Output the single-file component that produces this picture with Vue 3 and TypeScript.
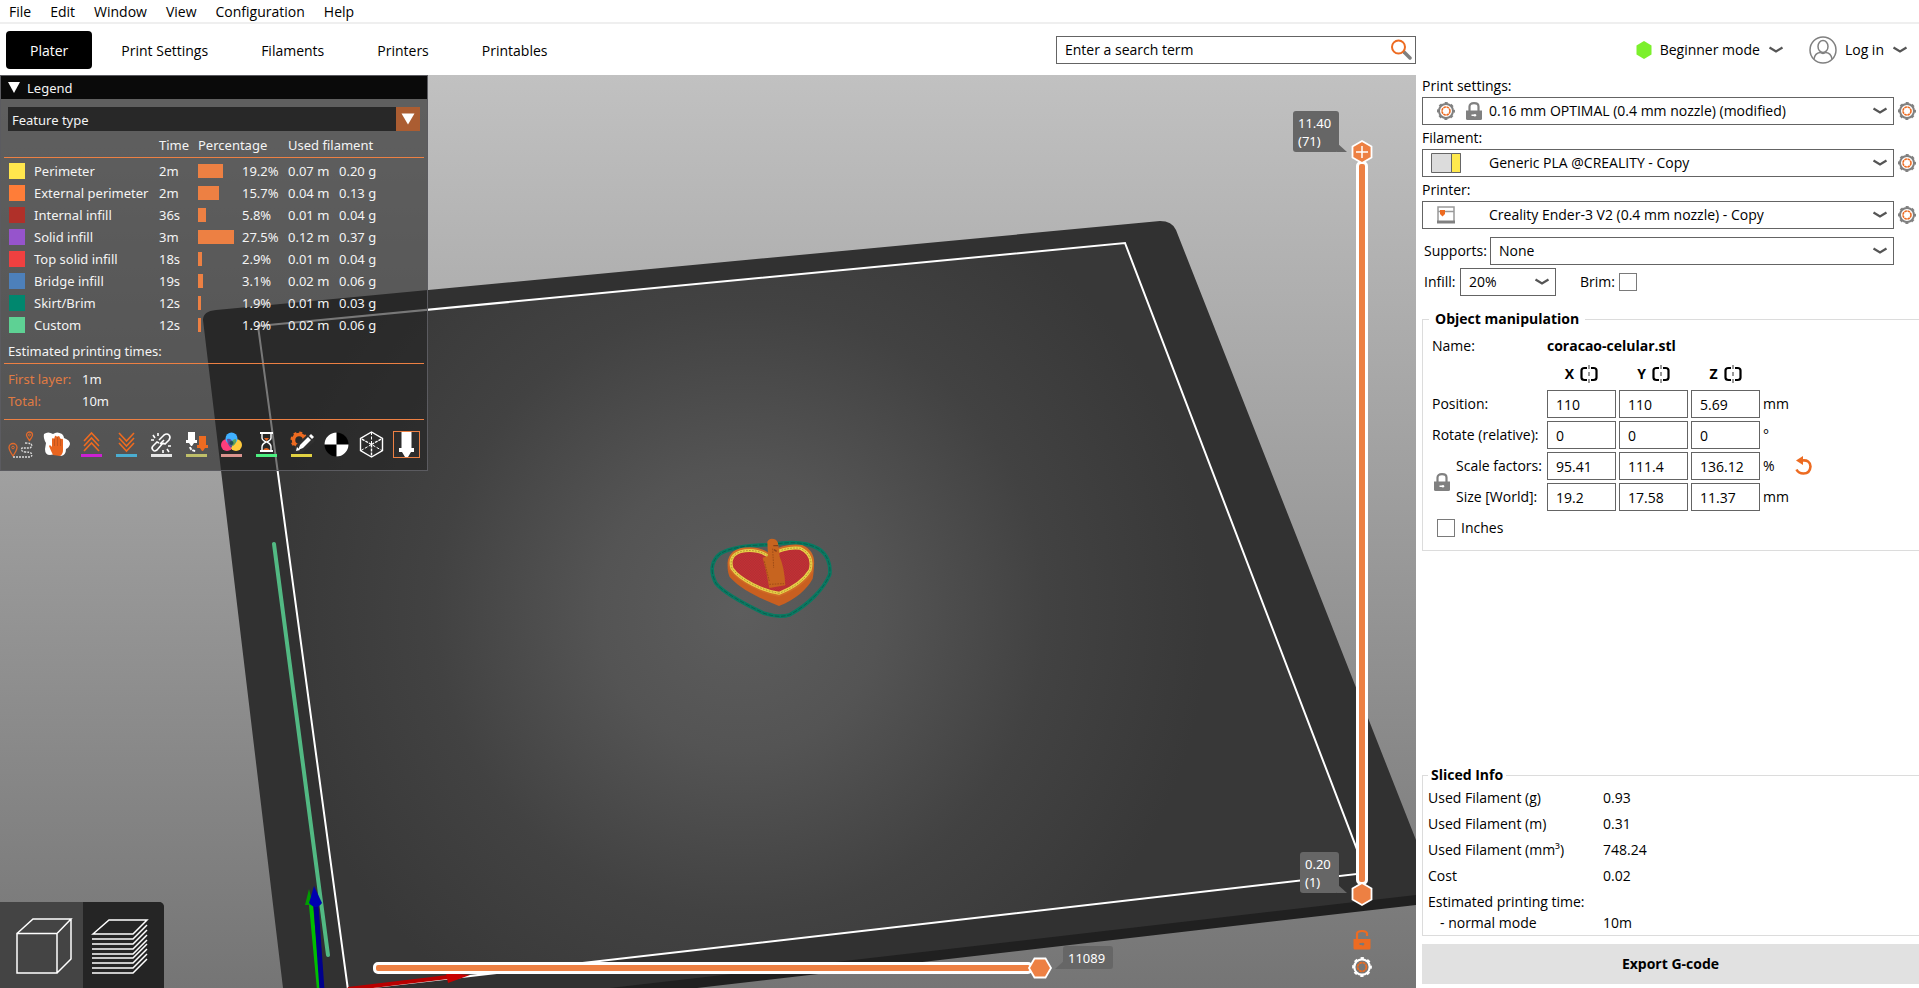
<script setup lang="ts">
import { ref } from 'vue'

interface Feature {
  name: string
  color: string
  time: string
  percent: number
  meters: string
  grams: string
}

const menus = ['File', 'Edit', 'Window', 'View', 'Configuration', 'Help']
const tabs = ['Plater', 'Print Settings', 'Filaments', 'Printers', 'Printables']
const activeTab = ref('Plater')

const features: Feature[] = [
  { name: 'Perimeter', color: '#ffe64d', time: '2m', percent: 19.2, meters: '0.07 m', grams: '0.20 g' },
  { name: 'External perimeter', color: '#ff7d38', time: '2m', percent: 15.7, meters: '0.04 m', grams: '0.13 g' },
  { name: 'Internal infill', color: '#b03029', time: '36s', percent: 5.8, meters: '0.01 m', grams: '0.04 g' },
  { name: 'Solid infill', color: '#9654cc', time: '3m', percent: 27.5, meters: '0.12 m', grams: '0.37 g' },
  { name: 'Top solid infill', color: '#f04040', time: '18s', percent: 2.9, meters: '0.01 m', grams: '0.04 g' },
  { name: 'Bridge infill', color: '#4d80ba', time: '19s', percent: 3.1, meters: '0.02 m', grams: '0.06 g' },
  { name: 'Skirt/Brim', color: '#00876e', time: '12s', percent: 1.9, meters: '0.01 m', grams: '0.03 g' },
  { name: 'Custom', color: '#5ed194', time: '12s', percent: 1.9, meters: '0.02 m', grams: '0.06 g' },
]

const presets = [
  { id: 'print', label: 'Print settings:', value: '0.16 mm OPTIMAL (0.4 mm nozzle) (modified)' },
  { id: 'filament', label: 'Filament:', value: 'Generic PLA @CREALITY - Copy' },
  { id: 'printer', label: 'Printer:', value: 'Creality Ender-3 V2 (0.4 mm nozzle) - Copy' },
]

const axes = ['X', 'Y', 'Z']
const transforms = [
  { label: 'Position:', indent: false, values: ['110', '110', '5.69'], unit: 'mm' },
  { label: 'Rotate (relative):', indent: false, values: ['0', '0', '0'], unit: '°' },
  { label: 'Scale factors:', indent: true, values: ['95.41', '111.4', '136.12'], unit: '%' },
  { label: 'Size [World]:', indent: true, values: ['19.2', '17.58', '11.37'], unit: 'mm' },
]

const sliced = [
  ['Used Filament (g)', '0.93'],
  ['Used Filament (m)', '0.31'],
  ['Used Filament (mm³)', '748.24'],
  ['Cost', '0.02'],
]

const layerLines = [939, 944, 949, 954, 958, 963, 968, 973]
const topLayer = ref(71)
const bottomLayer = ref(1)
const move = ref(11089)
const brim = ref(false)
const inches = ref(false)
</script>

<template>
  <div class="app">
    <svg class="defs" aria-hidden="true">
      <symbol id="gear" viewBox="-10 -10 20 20">
        <circle r="7" fill="none" stroke="currentColor" stroke-width="2" />
        <circle r="8" fill="none" stroke="currentColor" stroke-width="2" stroke-dasharray="3 3.283" stroke-dashoffset="1.5" />
        <circle r="4" fill="none" stroke="#ed6b21" stroke-width="1.6" stroke-dasharray="2.6 .54" />
      </symbol>
      <symbol id="chevron" viewBox="0 0 16 8">
        <path d="M1.5 1.5 8 5.5l6.500-4" fill="none" stroke="#555" stroke-width="2.2" />
      </symbol>
      <symbol id="lock" viewBox="0 0 16 18">
        <path d="M3.500 9V4.500Q3.500 1.200 8 1.200t4.500 3.300V9" fill="none" stroke="currentColor" stroke-width="2.200" />
        <path d="M0 8.500h16v8q0 1.500-1.500 1.500h-13Q0 18 0 16.500z" fill="currentColor" />
        <path d="M5.500 12.500h2q2-1.500 3 .7-1 2-3 .8h-2z" fill="#fff" />
      </symbol>
    </svg>

    <nav class="menubar" aria-label="Menu">
      <button v-for="m in menus" :key="m" type="button">{{ m }}</button>
    </nav>

    <header class="topbar">
      <nav class="tabs" aria-label="Pages">
        <button
          v-for="t in tabs"
          :key="t"
          type="button"
          :class="{ active: t === activeTab }"
          @click="activeTab = t"
        >{{ t }}</button>
      </nav>
      <label class="search">
        <input type="text" placeholder="Enter a search term" aria-label="Search" />
        <svg width="22" height="22" viewBox="0 0 22 22" aria-hidden="true">
          <path d="m14 13 6 6" stroke="#808080" stroke-width="3.500" stroke-linecap="round" />
          <circle cx="8.500" cy="8" r="6.500" fill="#fff" stroke="#ed6b21" stroke-width="2" />
        </svg>
      </label>
      <div class="account">
        <button type="button" class="mode">
          <svg width="16" height="18" viewBox="0 0 16 18" aria-hidden="true"><path d="M8 0l7.500 4.500v9L8 18 .5 13.500v-9z" fill="#7cf02c" /></svg>
          <span>Beginner mode</span>
          <svg width="16" height="8" aria-hidden="true"><use href="#chevron" /></svg>
        </button>
        <button type="button" class="login">
          <svg width="28" height="28" viewBox="0 0 28 28" fill="none" stroke="#808080" stroke-width="1.500" aria-hidden="true">
            <circle cx="14" cy="14" r="13" />
            <ellipse cx="14" cy="10.500" rx="5" ry="6" />
            <path d="M5 23q1-6 6-6.500 3 2 6 0 5 .5 6 6.500" />
          </svg>
          <span>Log in</span>
          <svg width="16" height="8" aria-hidden="true"><use href="#chevron" /></svg>
        </button>
      </div>
    </header>

    <div class="workspace">
      <main class="viewport">
        <svg class="scene" viewBox="0 75 1416 913" preserveAspectRatio="xMidYMid slice" role="img" aria-label="Print bed with sliced heart">
          <defs>
            <linearGradient id="sky" x1="0" y1="0" x2="0" y2="1">
              <stop offset="0" stop-color="#c1c1c1" />
              <stop offset="1" stop-color="#757575" />
            </linearGradient>
            <radialGradient id="plate" gradientUnits="userSpaceOnUse" cx="740" cy="610" r="470">
              <stop offset="0" stop-color="#5d5d5d" />
              <stop offset=".3" stop-color="#545454" />
              <stop offset=".65" stop-color="#424242" />
              <stop offset="1" stop-color="#383838" />
            </radialGradient>
            <pattern id="hatch" width="5" height="5" patternUnits="userSpaceOnUse">
              <rect width="5" height="5" fill="#c93137" />
              <path d="M0 0l5 5" stroke="#9b2b2d" stroke-width="1.500" />
            </pattern>
          </defs>
          <rect y="75" width="1416" height="913" fill="url(#sky)" />
          <path d="M283 988H697L1416 905V890L400 970z" fill="#202020" />
          <path d="M203 320q0-9 13-10L1160 221q12 0 16 9L1416 840v55L610 988H283z" fill="#313131" />
          <path d="M258 326 1125 243 1366 873 348 990z" fill="url(#plate)" />
          <path d="M258 326 1125 243 1366 873 348 990z" fill="none" stroke="#fff" stroke-width="2" />
          <path d="M274 544 328 955" stroke="#52b983" stroke-width="4" stroke-linecap="round" />
          <path d="m311 905 8 85" stroke="#00be00" stroke-width="4" />
          <path d="m309 889 4 16h-8z" fill="#009c00" />
          <path d="m316 905 6 85" stroke="#00008c" stroke-width="5" />
          <path d="m314 886 8 17q-6 8-13 0z" fill="#0000b0" />
          <path d="m348 989 100-12" stroke="#b80000" stroke-width="4" />
          <path d="m446 973 24 2-22 8z" fill="#c80000" />

          <g transform="translate(690 520) scale(.3333)">
            <path d="M245 74C300 64 350 66 385 86c28 17 38 50 34 78-18 44-64 90-119 120-28 9-50 5-78-4C170 255 100 218 78 190c-18-33-16-68 14-90 36-20 90-25 153-26z" fill="none" stroke="#087a62" stroke-width="11" />
            <path d="M245 74C300 64 350 66 385 86c28 17 38 50 34 78-18 44-64 90-119 120-28 9-50 5-78-4C170 255 100 218 78 190c-18-33-16-68 14-90 36-20 90-25 153-26z" fill="none" stroke="#0b4f42" stroke-width="2" stroke-dasharray="14 5" />
            <path d="M114 118c-3 22-1 40 5 53 38 42 98 66 148 87 50-20 84-50 101-82 5-22 3-45 1-60z" fill="#c95f20" />
            <path d="M267 226C218 218 148 185 121 147c-10-27 2-50 29-58 36-9 70 0 89 17 18-21 60-32 96-27 33 14 38 43 30 75-20 34-56 56-98 72z" fill="url(#hatch)" stroke="#d06a26" stroke-width="8" stroke-linejoin="round" />
            <path d="M267 220C219 212 151 181 126 145c-8-25 2-43 26-50 35-9 69 1 87 17 20-21 58-31 92-27 29 13 37 38 29 66-20 32-51 53-93 69z" fill="none" stroke="#e8d048" stroke-width="9" stroke-linejoin="round" />
            <path d="M267 220C219 212 151 181 126 145c-8-25 2-43 26-50 35-9 69 1 87 17 20-21 58-31 92-27 29 13 37 38 29 66-20 32-51 53-93 69z" fill="none" stroke="#9c7a26" stroke-width="2" stroke-dasharray="5 4" />
            <path d="M232 65q6-12 20-8 12 4 13 18l4 35q14 30 17 86l-48 8q-8-50-20-91l16-5z" fill="#c7641f" />
            <path d="m238 193 44-2m-34-105 3 58m-28-20 15 60" stroke="#9f4b16" stroke-width="3" stroke-dasharray="5 3" fill="none" />
            <path d="M250 77h14m-12 12 8 5" stroke="#87401a" stroke-width="4" />
          </g>
        </svg>

        <section class="legend" aria-label="Legend">
          <h2>
            <svg width="14" height="12" viewBox="0 0 14 12" aria-hidden="true"><path d="M1 0h12L7 11z" fill="#fff" /></svg>
            Legend
          </h2>
          <div class="viewtype">
            <select aria-label="View type"><option>Feature type</option></select>
            <svg width="24" height="24" viewBox="0 0 24 24" aria-hidden="true"><path fill="#ab5d32" d="M0 0h24v24H0z" /><path d="M5.500 6.500h13l-6.500 11z" fill="#fff" /></svg>
          </div>
          <table>
            <colgroup>
              <col class="c-swatch" /><col class="c-name" /><col class="c-time" /><col class="c-bar" /><col class="c-pct" /><col class="c-m" /><col />
            </colgroup>
            <thead>
              <tr><th colspan="2"></th><th>Time</th><th colspan="2">Percentage</th><th colspan="2">Used filament</th></tr>
            </thead>
            <tbody>
              <tr v-for="f in features" :key="f.name">
                <td><i class="swatch" :style="{ background: f.color }"></i></td>
                <td>{{ f.name }}</td>
                <td>{{ f.time }}</td>
                <td><i class="bar" :style="{ width: Math.ceil(f.percent * 1.3) + 'px' }"></i></td>
                <td>{{ f.percent.toFixed(1) }}%</td>
                <td>{{ f.meters }}</td>
                <td>{{ f.grams }}</td>
              </tr>
            </tbody>
          </table>
          <p class="estimate">Estimated printing times:</p>
          <dl>
            <dt>First layer:</dt><dd>1m</dd>
            <dt>Total:</dt><dd>10m</dd>
          </dl>
          <div class="toggles">
            <button type="button" aria-label="Travel">
              <svg viewBox="0 0 27 27" fill="none">
                <path d="M5 25q-4-6-4-8.500a4 4 0 0 1 8 0Q9 19 5 25z" stroke="#e06a2c" stroke-width="1.300" /><circle cx="5" cy="16.500" r="1.300" stroke="#e06a2c" />
                <path d="M21.500 9.500q-3-4-3-5.500a3 3 0 0 1 6 0q0 1.500-3 5.500z" stroke="#e06a2c" stroke-width="1.300" /><circle cx="21.500" cy="4" r="1" stroke="#e06a2c" />
                <path d="M5 26h17q3-1 1-4-1-1-6-1-5-1-3-4h8q3-2 1-4-2-1-6-1" stroke="#ddd" stroke-width="1.300" stroke-dasharray="2 1" />
              </svg>
            </button>
            <button type="button" aria-label="Wipe">
              <svg viewBox="0 0 27 27">
                <path d="M1 3q4-3 9 0 4-3 9 0 2 2 2 4 6 2 6 6-1 4-4 5 0 6-5 7l-5-2-6 1q-5 0-5-6l1-6q-3-5-2-9z" fill="#fff" />
                <path d="M10 24q-2-4-4-9 1-2 3 1V8q1-2 2 0l1-3q1-1 2 1l1-1q2 0 2 2l1 1q2-1 2 1v10q0 4-3 6z" fill="#e8641f" />
                <path d="M11.500 8v7m3-9v9m3-7v7" stroke="#b5501e" stroke-width=".7" />
              </svg>
            </button>
            <button type="button" aria-label="Retractions">
              <svg viewBox="0 0 27 27" fill="none"><path d="m6 10 7.500-8L21 10M6 15l7.500-8 7.500 8M6 20l7.500-8 7.500 8" stroke="#ed6b21" stroke-width="1.600" /><path d="M3 24.500h21" stroke="#cc21d1" stroke-width="3" /></svg>
            </button>
            <button type="button" aria-label="Deretractions">
              <svg viewBox="0 0 27 27" fill="none"><path d="m6 2 7.500 8L21 2M6 7l7.500 8L21 7M6 12l7.500 8 7.500-8" stroke="#ed6b21" stroke-width="1.600" /><path d="M3 24.500h21" stroke="#4aadd1" stroke-width="3" /></svg>
            </button>
            <button type="button" aria-label="Seams">
              <svg viewBox="0 0 27 27" fill="none">
                <path d="m11 9 5-5q3-2 5 0t0 5l-4 4-2-1M15 12l-6 7q-3 2-4 0-2-2 0-4l4-4 2 1M12 13l4-4M6 9H3m4-2L5 4m5 1V2m9 16 2 3m-6-2v3m5-7h3" stroke="#fff" stroke-width="1.600" />
                <path d="M3 24.500h21" stroke="#e6e6e6" stroke-width="3" />
              </svg>
            </button>
            <button type="button" aria-label="Tool changes">
              <svg viewBox="0 0 27 27" fill="none">
                <path d="M5 1h7v8h2v3h-3l-2 3h-1l-2-3H3V9h2z" fill="#fff" /><path d="M16 5h7v9h2v3h-3l-2 3h-1l-2-3h-3v-3h2z" fill="#ed6b21" />
                <path d="M7 16q1 4 6 4" stroke="#fff" stroke-width="2" stroke-dasharray="3 1" /><path d="M3 24.500h21" stroke="#bfbf69" stroke-width="3" />
              </svg>
            </button>
            <button type="button" aria-label="Color changes">
              <svg viewBox="0 0 27 27">
                <circle cx="9" cy="14" r="6" fill="#ff3d7b" /><circle cx="18" cy="14" r="6" fill="#ffca3d" /><circle cx="13.500" cy="7.500" r="6" fill="#3fb0ff" />
                <path d="M9 8q5-1 6 5-1 3-2 4-4-4-4-9z" fill="#5a4f9c" /><path d="M18 8q-4 0-5 5 1 2 2 2 4-3 3-7z" fill="#5aa362" /><circle cx="13.500" cy="12" r="2" fill="#224c57" />
                <path d="M3 23h21v3H3z" fill="#db948f" />
              </svg>
            </button>
            <button type="button" aria-label="Pause prints">
              <svg viewBox="0 0 27 27" fill="none">
                <path d="M7 2h13M7 20h13" stroke="#fff" stroke-width="2" /><path d="M9 3v4q0 2 4 4-4 2-4 5v3m9-16v4q0 2-4 4 4 2 4 5v3" stroke="#fff" stroke-width="1.400" />
                <path d="M10 19q3-4 7 0zM11 7h5l-2.500 3z" fill="#e8641f" /><path d="M3 24.500h21" stroke="#4df082" stroke-width="3" />
              </svg>
            </button>
            <button type="button" aria-label="Custom G-codes">
              <svg viewBox="0 0 27 27" fill="none">
                <circle cx="11" cy="9" r="5.500" stroke="#ed6b21" stroke-width="3.500" /><circle cx="11" cy="9" r="7.500" stroke="#ed6b21" stroke-width="2" stroke-dasharray="3 2.890" />
                <path d="m20 3 7 7-13 12H6l2-8z" fill="#303030" /><path d="m10 19 2-5 8-8 3 3-8 8z" fill="#fff" /><path d="m21 5 2-2 3 3-2 2z" fill="#fff" /><path d="m9 16 3 3-4 1z" fill="#fff" />
                <path d="M3 24.500h21" stroke="#e2d242" stroke-width="3" />
              </svg>
            </button>
            <button type="button" aria-label="Center of gravity">
              <svg viewBox="0 0 27 27"><circle cx="13.500" cy="13.500" r="12" fill="#000" /><path d="M13.500 13.500V1.500a12 12 0 0 0-12 12zM13.500 13.500v12a12 12 0 0 0 12-12z" fill="#fff" /></svg>
            </button>
            <button type="button" aria-label="Shells">
              <svg viewBox="0 0 27 27" fill="none" stroke="#fff" stroke-width="1.400"><path d="m13.500 1 11 6.500v12l-11 6.500-11-6.500v-12z" /><path d="M13.500 13.500 24 7.500m-10.500 6L3 7.500m10.500 6V26" stroke-dasharray="3 1" /><path d="M13.500 1v12.500M3 19.500l10.500-6 10.500 6" stroke-width="1" stroke-dasharray="3 1.500" /></svg>
            </button>
            <button type="button" class="on" aria-label="Tool marker">
              <svg viewBox="0 0 27 27"><path d="M8.500 0h10v17H21v4h-3l-3 5h-3l-3-5H6v-4h2.500z" fill="#fff" /></svg>
            </button>
          </div>
        </section>

        <div class="views">
          <button type="button" aria-label="3D editor view">
            <svg width="83" height="86" viewBox="0 902 83 86" fill="none" stroke="#fff" stroke-width="1.500"><path d="M17 933.500h40V973H17zM17 933.500 33 919h38L57 933.500M71 919v40L57 973" /></svg>
          </button>
          <button type="button" class="on" aria-label="Preview">
            <svg width="81" height="86" viewBox="83 902 81 86" fill="none" stroke="#fff" stroke-width="1.500">
              <path d="M93 934l16-14h38l-14 14z" />
              <path v-for="y in layerLines" :key="y" :d="`M92 ${y}h41l14-14`" />
            </svg>
          </button>
        </div>

        <div class="layers">
          <output class="tip tip-top">11.40<br />(71)</output>
          <output class="tip tip-bottom">0.20<br />(1)</output>
          <input v-model="bottomLayer" type="range" min="1" max="71" aria-label="Lowest layer" />
          <input v-model="topLayer" class="upper" type="range" min="1" max="71" aria-label="Highest layer" />
        </div>
        <div class="layer-tools">
          <button type="button" aria-label="One layer mode">
            <svg width="20" height="22" viewBox="0 0 20 22"><path d="M5 10V5q0-3 5-3t5 3v2" fill="none" stroke="#ed6b21" stroke-width="2.200" /><path d="M1.500 10h17v9q0 1.500-1.500 1.500H3q-1.500 0-1.500-1.500zm6 4v2h2q2 1.500 3-1-1-2-3-1z" fill="#ed6b21" fill-rule="evenodd" /></svg>
          </button>
          <button type="button" class="white" aria-label="Slider settings"><svg width="22" height="22"><use href="#gear" /></svg></button>
        </div>

        <div class="moves">
          <input v-model="move" type="range" min="10000" max="11089" aria-label="Moves" />
          <output class="tip tip-move">11089</output>
        </div>
      </main>

      <aside class="sidebar">
        <div class="presets">
          <div v-for="p in presets" :key="p.id" class="preset">
            <label :for="p.id">{{ p.label }}</label>
            <div class="preset-row">
              <div class="combo">
                <select :id="p.id"><option>{{ p.value }}</option></select>
                <svg v-if="p.id === 'print'" class="lead" width="60" height="28" color="#808080" aria-hidden="true">
                  <use href="#gear" x="14" y="4" width="20" height="20" /><use href="#lock" x="44" y="5" width="16" height="18" />
                </svg>
                <svg v-else-if="p.id === 'filament'" class="lead" width="60" height="28" aria-hidden="true">
                  <path d="M9.500 4.500h29v19h-29z" fill="#dcdcdc" stroke="#666" /><path d="M29.500 4.500h9v19h-9z" fill="#ffe94d" stroke="#666" />
                </svg>
                <svg v-else class="lead" width="60" height="28" aria-hidden="true">
                  <path d="M16 6h16v15H16zM16 10.500h16" fill="none" stroke="#999" stroke-width="1.500" /><path d="M15 21h18" stroke="#808080" stroke-width="3" /><path d="M18 9h5v4l-2.500 2.500L18 13z" fill="#ed6b21" />
                </svg>
                <svg class="arrow" width="16" height="8" aria-hidden="true"><use href="#chevron" /></svg>
              </div>
              <button type="button" class="gear" :aria-label="'Edit ' + p.label"><svg width="20" height="20"><use href="#gear" /></svg></button>
            </div>
          </div>
        </div>

        <div class="supports">
          <label for="supports">Supports:</label>
          <div class="combo">
            <select id="supports"><option>None</option></select>
            <svg class="arrow" width="16" height="8" aria-hidden="true"><use href="#chevron" /></svg>
          </div>
        </div>
        <div class="infill">
          <label for="infill">Infill:</label>
          <div class="combo">
            <select id="infill"><option>20%</option></select>
            <svg class="arrow" width="16" height="8" aria-hidden="true"><use href="#chevron" /></svg>
          </div>
          <label for="brim">Brim:</label>
          <input id="brim" v-model="brim" type="checkbox" />
        </div>

        <fieldset class="object">
          <legend>Object manipulation</legend>
          <div class="grid">
            <span class="label">Name:</span>
            <strong class="name">coracao-celular.stl</strong>
            <span class="label"></span>
            <div v-for="a in axes" :key="a" class="axis">
              <strong>{{ a }}</strong>
              <button type="button" :aria-label="'Mirror ' + a">
                <svg width="18" height="18" viewBox="0 0 18 18" fill="none" stroke="#000" stroke-width="2.200"><path d="M7 3H4.500Q1.500 3 1.500 5.500v7Q1.500 15 4.500 15H7m4-12h2.500q3 0 3 2.500v7q0 2.500-3 2.500H11" /><path d="M9 0v4m0 3v4m0 3v4" stroke="#777" stroke-width="1.500" /></svg>
              </button>
            </div>
            <span></span>
            <svg class="link" width="16" height="18" color="#808080" aria-label="Uniform scale locked"><use href="#lock" /></svg>
            <template v-for="(r, i) in transforms" :key="r.label">
              <span class="label" :class="{ indent: r.indent }" :style="{ gridRow: i + 3 }">{{ r.label }}</span>
              <input
                v-for="(v, j) in r.values"
                :key="j"
                type="text"
                :value="v"
                :aria-label="r.label + ' ' + axes[j]"
                :style="{ gridRow: i + 3 }"
              />
              <span class="unit" :style="{ gridRow: i + 3 }">{{ r.unit }}
                <button v-if="r.unit === '%'" type="button" aria-label="Reset scale">
                  <svg width="18" height="20" viewBox="0 0 18 20"><path d="M7 4.500q8-1 8.500 6-.5 7-7 7-5 0-7-4" fill="none" stroke="#ed6b21" stroke-width="2.600" /><path d="M1 4.500 8 0v9z" fill="#ed6b21" /></svg>
                </button>
              </span>
            </template>
            <label class="inches"><input v-model="inches" type="checkbox" />Inches</label>
          </div>
        </fieldset>

        <fieldset class="sliced">
          <legend>Sliced Info</legend>
          <dl>
            <template v-for="s in sliced" :key="s[0]"><dt>{{ s[0] }}</dt><dd>{{ s[1] }}</dd></template>
            <dt class="wide">Estimated printing time:</dt>
            <dt class="sub">- normal mode</dt><dd class="sub">10m</dd>
          </dl>
        </fieldset>
        <button type="button" class="export">Export G-code</button>
      </aside>
    </div>
  </div>
</template>

<style>
body {
  margin: 0;
  background: #fff;
}
</style>

<style scoped>
.app {
  display: flex;
  flex-direction: column;
  height: 100vh;
  min-height: 800px;
  font: 14px/20px "Open Sans", "Noto Sans", sans-serif;
  color: #000;
  overflow: hidden;
}
.app *,
.app *::before {
  box-sizing: border-box;
}
.defs {
  position: absolute;
  width: 0;
  height: 0;
}
button,
input,
select {
  font: inherit;
  color: inherit;
}
button {
  border: 0;
  padding: 0;
  background: none;
}
svg {
  display: block;
}
.menubar {
  display: flex;
  gap: 1px;
  height: 24px;
  border-bottom: 2px solid #efefef;
}
.menubar button {
  padding: 2px 9px 0;
}
.topbar {
  display: flex;
  align-items: center;
  height: 51px;
}
.tabs {
  display: flex;
  flex: 1;
  gap: 5px;
  padding-left: 6px;
}
.tabs button {
  height: 38px;
  padding: 2px 24px 0;
  border-radius: 4px;
}
.tabs .active {
  background: #000;
  color: #fff;
}
.search {
  display: flex;
  align-items: center;
  width: 360px;
  height: 28px;
  padding: 0 3px 0 8px;
  border: 1px solid #646464;
}
.search input {
  flex: 1;
  border: 0;
  padding: 1px 0 0;
  outline: 0;
}
.search input::placeholder {
  color: #000;
  opacity: 1;
}
.account {
  display: flex;
  justify-content: flex-end;
  gap: 25px;
  width: 503px;
  padding-right: 11px;
}
.account button {
  display: flex;
  align-items: center;
  gap: 8px;
}
.workspace {
  display: flex;
  flex: 1;
  min-height: 0;
}
.viewport {
  position: relative;
  flex: 1;
  min-width: 0;
  overflow: hidden;
}
.scene {
  position: absolute;
  inset: 0;
  width: 100%;
  height: 100%;
}
.legend {
  position: absolute;
  top: 0;
  left: 0;
  width: 428px;
  height: 396px;
  border: 1px solid #5b5b60;
  background: rgba(35, 35, 35, 0.61);
  color: #f4f4f4;
  font: 13px/20px "Noto Sans", sans-serif;
}
.legend h2 {
  display: flex;
  align-items: center;
  gap: 6px;
  margin: 0;
  height: 23px;
  padding-left: 6px;
  background: #0a0a0a;
  font: inherit;
}
.viewtype {
  display: flex;
  margin: 8px 7px 2px;
  height: 24px;
}
.viewtype select {
  flex: 1;
  appearance: none;
  border: 0;
  border-radius: 0;
  padding: 2px 4px 0;
  background: #282828;
}
.legend table {
  width: 420px;
  margin: 0 3px;
  table-layout: fixed;
  border-collapse: collapse;
  white-space: nowrap;
}
.c-swatch { width: 30px; }
.c-name { width: 125px; }
.c-time { width: 39px; }
.c-bar { width: 44px; }
.c-pct { width: 46px; }
.c-m { width: 51px; }
.legend thead tr {
  height: 24px;
  border-bottom: 1px solid #ed8043;
}
.legend tbody::before {
  content: "";
  display: block;
  height: 2px;
}
.legend tbody tr {
  height: 22px;
}
.legend th,
.legend td {
  padding: 0;
  text-align: left;
  font-weight: 400;
}
.swatch,
.bar {
  display: block;
}
.swatch {
  width: 16px;
  height: 16px;
  margin-left: 5px;
}
.bar {
  height: 14px;
  background: #ed8043;
}
.estimate {
  margin: 0 3px;
  padding: 5px 4px 2px;
  border-bottom: 1px solid #ed8043;
}
.legend dl {
  display: grid;
  grid-template-columns: 74px 1fr;
  margin: 0 3px;
  padding: 4px 4px 7px;
  line-height: 22px;
  border-bottom: 1px solid #ed8043;
}
.legend dt {
  color: #e07b43;
}
dd {
  margin: 0;
}
.toggles {
  display: flex;
  justify-content: space-between;
  padding: 11px 7px 0;
}
.toggles button {
  width: 27px;
  height: 27px;
}
.toggles .on {
  outline: 1px solid #ed8043;
  outline-offset: -1px;
}
.views {
  position: absolute;
  left: 0;
  bottom: 0;
  display: flex;
  border-radius: 0 5px 0 0;
  overflow: hidden;
  background: #444;
}
.views .on {
  background: #252525;
}
.layers {
  position: absolute;
  top: 64px;
  right: 42px;
  bottom: 81px;
  width: 24px;
}
.layers::before {
  content: "";
  position: absolute;
  top: 22px;
  bottom: 22px;
  left: 6px;
  width: 12px;
  border: 3px solid #fff;
  border-radius: 5px;
  background: #ed8043;
}
.layers input {
  position: absolute;
  inset: 0;
  width: 24px;
  height: 100%;
  margin: 0;
  appearance: none;
  background: none;
  writing-mode: vertical-lr;
  direction: rtl;
}
.layers input::-webkit-slider-thumb {
  appearance: none;
  width: 24px;
  height: 26px;
  background: url("data:image/svg+xml,%3Csvg xmlns='http://www.w3.org/2000/svg' viewBox='0 0 24 26'%3E%3Cpath d='M12 2l9.500 5.500v11L12 24l-9.500-5.500v-11z' fill='%23ed8043' stroke='white' stroke-width='1.800'/%3E%3C/svg%3E");
}
.layers .upper {
  pointer-events: none;
}
.layers .upper::-webkit-slider-thumb {
  pointer-events: auto;
  background: url("data:image/svg+xml,%3Csvg xmlns='http://www.w3.org/2000/svg' viewBox='0 0 24 26'%3E%3Cpath d='M12 2l9.500 5.500v11L12 24l-9.500-5.500v-11z' fill='%23ed8043' stroke='white' stroke-width='1.800'/%3E%3Cpath d='M12 7v12M6 13h12' stroke='white' stroke-width='1.500'/%3E%3C/svg%3E");
}
.tip {
  position: absolute;
  padding: 3px 5px 2px;
  border-radius: 3px;
  background: #666;
  color: #fff;
  font: 13px/18px "Noto Sans", sans-serif;
}
.tip::before {
  content: "";
  position: absolute;
  width: 10px;
  height: 9px;
  bottom: 0;
  right: -8px;
  background: #666;
  clip-path: polygon(0 0, 100% 100%, 0 100%);
}
.tip-top {
  top: -28px;
  right: 35px;
  width: 46px;
}
.tip-bottom {
  bottom: 14px;
  right: 35px;
  width: 39px;
}
.tip-move {
  top: -10px;
  left: 690px;
  width: 50px;
}
.tip-move::before {
  right: auto;
  left: -8px;
  clip-path: polygon(100% 0, 100% 100%, 0 100%);
}
.layer-tools {
  position: absolute;
  right: 43px;
  bottom: 10px;
  display: grid;
  justify-items: center;
  gap: 5px;
}
.white {
  color: #fff;
}
.moves {
  position: absolute;
  left: 373px;
  bottom: 8px;
  width: 680px;
  height: 24px;
}
.moves::before {
  content: "";
  position: absolute;
  left: 0;
  right: 20px;
  top: 6px;
  height: 12px;
  border: 3px solid #fff;
  border-radius: 5px;
  background: #ed8043;
}
.moves input {
  position: absolute;
  inset: 0;
  width: 100%;
  margin: 0;
  height: 24px;
  appearance: none;
  background: none;
}
.moves input::-webkit-slider-thumb {
  appearance: none;
  width: 26px;
  height: 24px;
  background: url("data:image/svg+xml,%3Csvg xmlns='http://www.w3.org/2000/svg' viewBox='0 0 26 24'%3E%3Cpath d='M2 12l5.500-9.500h11L24 12l-5.500 9.500h-11z' fill='%23ed8043' stroke='white' stroke-width='1.800'/%3E%3C/svg%3E");
}
.sidebar {
  display: flex;
  flex-direction: column;
  width: 503px;
  padding: 1px 0 4px 6px;
  background: #fff;
}
.presets {
  display: grid;
  gap: 3px;
}
.preset label {
  display: block;
  margin-bottom: 1px;
}
.preset-row {
  display: flex;
  align-items: center;
  gap: 3px;
  padding-right: 2px;
}
.combo {
  position: relative;
  flex: 1;
}
.combo select {
  display: block;
  width: 100%;
  height: 28px;
  appearance: none;
  border: 1px solid #646464;
  border-radius: 0;
  padding: 0 24px 0 66px;
  background: #fff;
}
.lead,
.arrow {
  position: absolute;
  pointer-events: none;
}
.lead {
  top: 0;
  left: 0;
}
.arrow {
  right: 6px;
  top: 10px;
}
.gear {
  color: #808080;
}
.supports {
  display: flex;
  align-items: center;
  gap: 4px;
  margin: 8px 25px 3px 2px;
}
.supports select,
.infill select {
  padding-left: 8px;
}
.supports label {
  width: 62px;
}
.infill {
  display: flex;
  align-items: center;
  margin-left: 2px;
}
.infill label:first-child {
  width: 36px;
}
.infill .combo {
  flex: 0 0 96px;
  margin-right: 24px;
}
.infill input {
  margin-left: 4px;
}
input[type="checkbox"] {
  appearance: none;
  flex: none;
  width: 18px;
  height: 18px;
  margin-block: 0;
  border: 1px solid #7a7a7a;
  background: #fff;
}
input[type="checkbox"]:checked {
  background: #ed6b21;
}
fieldset {
  min-width: 0;
  margin: 0;
  border: 1px solid #dcdcdc;
  border-right: 0;
}
legend {
  font-weight: 700;
}
.object {
  margin-top: 13px;
  padding: 5px 0 8px 9px;
}
.object legend {
  margin-left: -3px;
  padding: 0 6px;
}
.grid {
  display: grid;
  grid-template-columns: 21px 88px 69px 69px 69px 1fr;
  grid-template-rows: 24px 26px repeat(5, 28px);
  gap: 3px;
  align-items: center;
  white-space: nowrap;
}
.label {
  grid-column: 1 / 3;
}
.label.indent {
  grid-column: 2;
}
.name {
  grid-column: 3 / 7;
}
.axis {
  display: flex;
  align-items: center;
  justify-content: center;
  gap: 6px;
}
.link {
  grid-column: 1;
  grid-row: 5 / 7;
  margin-left: 2px;
}
.grid input[type="text"] {
  width: 69px;
  height: 28px;
  padding: 0 8px;
  border: 1px solid #646464;
}
.unit {
  position: relative;
}
.unit button {
  position: absolute;
  left: 32px;
  top: 0;
}
.inches {
  grid-column: 1 / 7;
  grid-row: 7;
  display: flex;
  align-items: center;
  gap: 6px;
}
.inches input {
  margin: 0 0 0 5px;
}
.sliced {
  margin-top: auto;
  padding: 0 0 4px 5px;
}
.sliced legend {
  padding: 0 3px;
}
.sliced dl {
  display: grid;
  grid-template-columns: 175px 1fr;
  margin: 0;
  line-height: 26px;
}
.sliced .wide {
  grid-column: 1 / 3;
}
.sliced .sub {
  line-height: 16px;
}
.sliced dt.sub {
  padding-left: 12px;
}
.export {
  height: 40px;
  margin-top: 8px;
  background: #e1e1e1;
  font-weight: 700;
}
</style>
